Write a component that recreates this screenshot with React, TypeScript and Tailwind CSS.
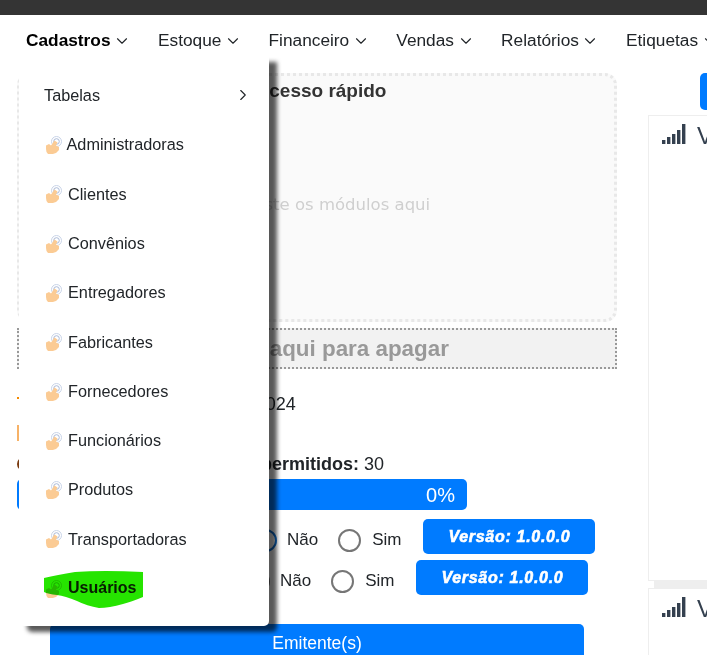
import { ChevronDown, ChevronRight } from "lucide-react";

const navItems = ["Estoque", "Financeiro", "Vendas", "Relatórios", "Etiquetas"];
const menuItems = [
  "Administradoras",
  "Clientes",
  "Convênios",
  "Entregadores",
  "Fabricantes",
  "Fornecedores",
  "Funcionários",
  "Produtos",
  "Transportadoras",
];

function HandIcon() {
  return (
    <svg width="18" height="19" viewBox="0 0 18 19" className="shrink-0">
      <circle cx="11.5" cy="6.5" r="5" fill="none" stroke="#c9d4e8" strokeWidth="1" />
      <circle cx="11.5" cy="6.5" r="2.8" fill="none" stroke="#a9b9d8" strokeWidth="1" />
      <path
        d="M1 10.5 L4 9 L6 10.5 L9.5 5.5 L12.5 7.5 L11 10.5 L14 12 L14 15 L11 18 Q6 20 3 19 Q0.8 17.5 1 13 Z"
        fill="#fbcb94"
      />
    </svg>
  );
}

function SignalIcon() {
  return (
    <svg width="25" height="20" viewBox="0 0 25 20" className="shrink-0">
      <rect x="0" y="16" width="3.4" height="4" fill="#34404f" />
      <rect x="5" y="13" width="3.4" height="7" fill="#34404f" />
      <rect x="10" y="10" width="3.4" height="10" fill="#34404f" />
      <rect x="15" y="6" width="3.4" height="14" fill="#34404f" />
      <rect x="20" y="0" width="3.4" height="20" fill="#34404f" />
    </svg>
  );
}

function Pill() {
  return (
    <div className="w-[172px] h-[35px] flex items-center justify-center rounded-[5px] bg-[#007bff] text-white text-[16px] font-bold italic tracking-[0.7px] [-webkit-text-stroke:0.6px_white]">
      Versão: 1.0.0.0
    </div>
  );
}

function Radio({ on }: { on?: boolean }) {
  return (
    <span
      className={
        on
          ? "w-[23px] h-[23px] rounded-full border-2 border-[#0f6fd0] shrink-0"
          : "w-[23px] h-[23px] rounded-full border-2 border-[#767676] shrink-0"
      }
    />
  );
}

function VersionRow({ offset, on }: { offset: string; on?: boolean }) {
  return (
    <div className={`flex items-center h-[35px] text-[17px] text-[#212529] ${offset}`}>
      <div className="flex items-center pt-[7px]">
        <Radio on={on} />
        <span className="ml-[10px]">Não</span>
        <span className="ml-[20px] flex">
          <Radio />
        </span>
        <span className="ml-[11px]">Sim</span>
      </div>
      <span className="ml-[22px]">
        <Pill />
      </span>
    </div>
  );
}

export default function App() {
  return (
    <div className="relative w-[707px] h-[655px] overflow-hidden bg-white font-['Liberation_Sans',sans-serif] text-[#212529]">
      <div className="h-[15px] bg-[#343434]" />

      <nav className="h-[50px] pl-[26px] pt-[2px] flex items-center whitespace-nowrap text-[17.3px]">
        <span className="font-bold text-black">Cadastros</span>
        <ChevronDown size={18} strokeWidth={1.5} className="ml-[2.5px] mr-[27px] shrink-0" />
        {navItems.map((item) => (
          <span key={item} className="flex items-center">
            {item}
            <ChevronDown size={18} strokeWidth={1.5} className="ml-[2.5px] mr-[26.6px] shrink-0" />
          </span>
        ))}
      </nav>

      <main className="flex mt-[8px] pl-[17px]">
        <div className="w-[600px] shrink-0">
          <div className="h-[249px] rounded-[12px] border-[3px] border-dotted border-[#e8e8e8] bg-[#fafafa] flex flex-col items-center">
            <h2 className="mt-[1px] ml-[8px] text-[19px] leading-[28px] font-bold text-[#333]">Acesso rápido</h2>
            <p className="mt-[88px] ml-[26px] font-['DejaVu_Sans',sans-serif] text-[#cfcfcf] text-[16.5px]">
              Arraste os módulos aqui
            </p>
          </div>
          <div className="mt-[6px] h-[41px] border-2 border-dotted border-[#999] bg-[#f2f2f2] flex items-center justify-center text-[22.4px] font-bold text-[#999]">
            Arraste aqui para apagar
          </div>

          <div className="mt-[22px] h-[27px] flex items-center text-[18px] whitespace-nowrap">
            <span className="w-[16px] h-[2px] bg-[#f58a00] mb-[13px]" />
            <span className="ml-[94px]">Validade: 10/10/2024</span>
          </div>
          <div className="mt-[1px] h-[28px] flex items-center">
            <span className="w-[16px] h-[16px] bg-[#f7b267]" />
          </div>
          <div className="mt-[3px] h-[28px] flex items-center text-[18px] whitespace-nowrap">
            <span className="w-[16px] h-[14px] rounded-full bg-[#7a3b10]" />
            <span className="ml-[149px]">
              <b>Módulos permitidos:</b> 30
            </span>
          </div>
          <div className="mt-[1px] w-[450px] h-[31px] rounded-[5px] bg-[#007bff] flex items-center justify-end pr-[12px] text-[20px] text-white">
            0%
          </div>

          <div className="mt-[9px]">
            <VersionRow offset="ml-[237px]" on />
          </div>
          <div className="mt-[6px]">
            <VersionRow offset="ml-[230px]" />
          </div>

          <button className="block mt-[29px] ml-[33px] w-[534px] h-[38px] rounded-t-[5px] bg-[#007bff] text-white text-[17.5px]">
            Emitente(s)
          </button>
        </div>

        <aside className="ml-[31px] w-[200px] shrink-0">
          <div className="ml-[52px] h-[37px] rounded-l-[5px] bg-[#007bff]" />
          <div className="mt-[5px] h-[466px] border border-[#eeeeee] pl-[13px] pt-[8px] flex items-start gap-[10px] text-[24px] leading-[24px]">
            <SignalIcon />
            <span className="text-[#34404f]">Vendas</span>
          </div>
          <div className="ml-[6px] h-[7px] bg-[#eeeeee]" />
          <div className="h-[100px] border border-[#eeeeee] pl-[13px] pt-[8px] flex items-start gap-[10px] text-[24px] leading-[24px]">
            <SignalIcon />
            <span className="text-[#34404f]">Vendas</span>
          </div>
        </aside>
      </main>

      <div className="absolute left-[19px] top-[56px] w-[250px] h-[570px] rounded-b-[5px] bg-white pt-[14.6px] shadow-[8px_6px_4px_rgba(0,0,0,0.65)] text-[16.25px] text-[#212529]">
        <div className="h-[49.3px] pl-[25px] pr-[17px] flex items-center justify-between">
          <span>Tabelas</span>
          <ChevronRight size={18} strokeWidth={1.5} />
        </div>
        {menuItems.map((item) => (
          <div key={item} className="h-[49.3px] pl-[26px] flex items-center gap-[5px]">
            <HandIcon />
            <span className={item === "Administradoras" ? "-ml-[1.5px]" : ""}>{item}</span>
          </div>
        ))}
        <div className="h-[49.3px] pl-[26px] flex items-center gap-[5px]">
          <HandIcon />
          <span className="font-bold text-[16px] text-[#222]">Usuários</span>
        </div>
        <svg
          width="102"
          height="42"
          viewBox="0 0 102 42"
          className="absolute left-[24px] top-[514px] mix-blend-multiply"
        >
          <path
            d="M1 8 Q14 5 32 2 Q60 0 100 2 L100 27 Q88 32 80 34 Q66 38 56 38 Q44 36 34 31 Q22 26 14 25 Q5 24 1 22 Z"
            fill="#26e400"
          />
        </svg>
      </div>
    </div>
  );
}
